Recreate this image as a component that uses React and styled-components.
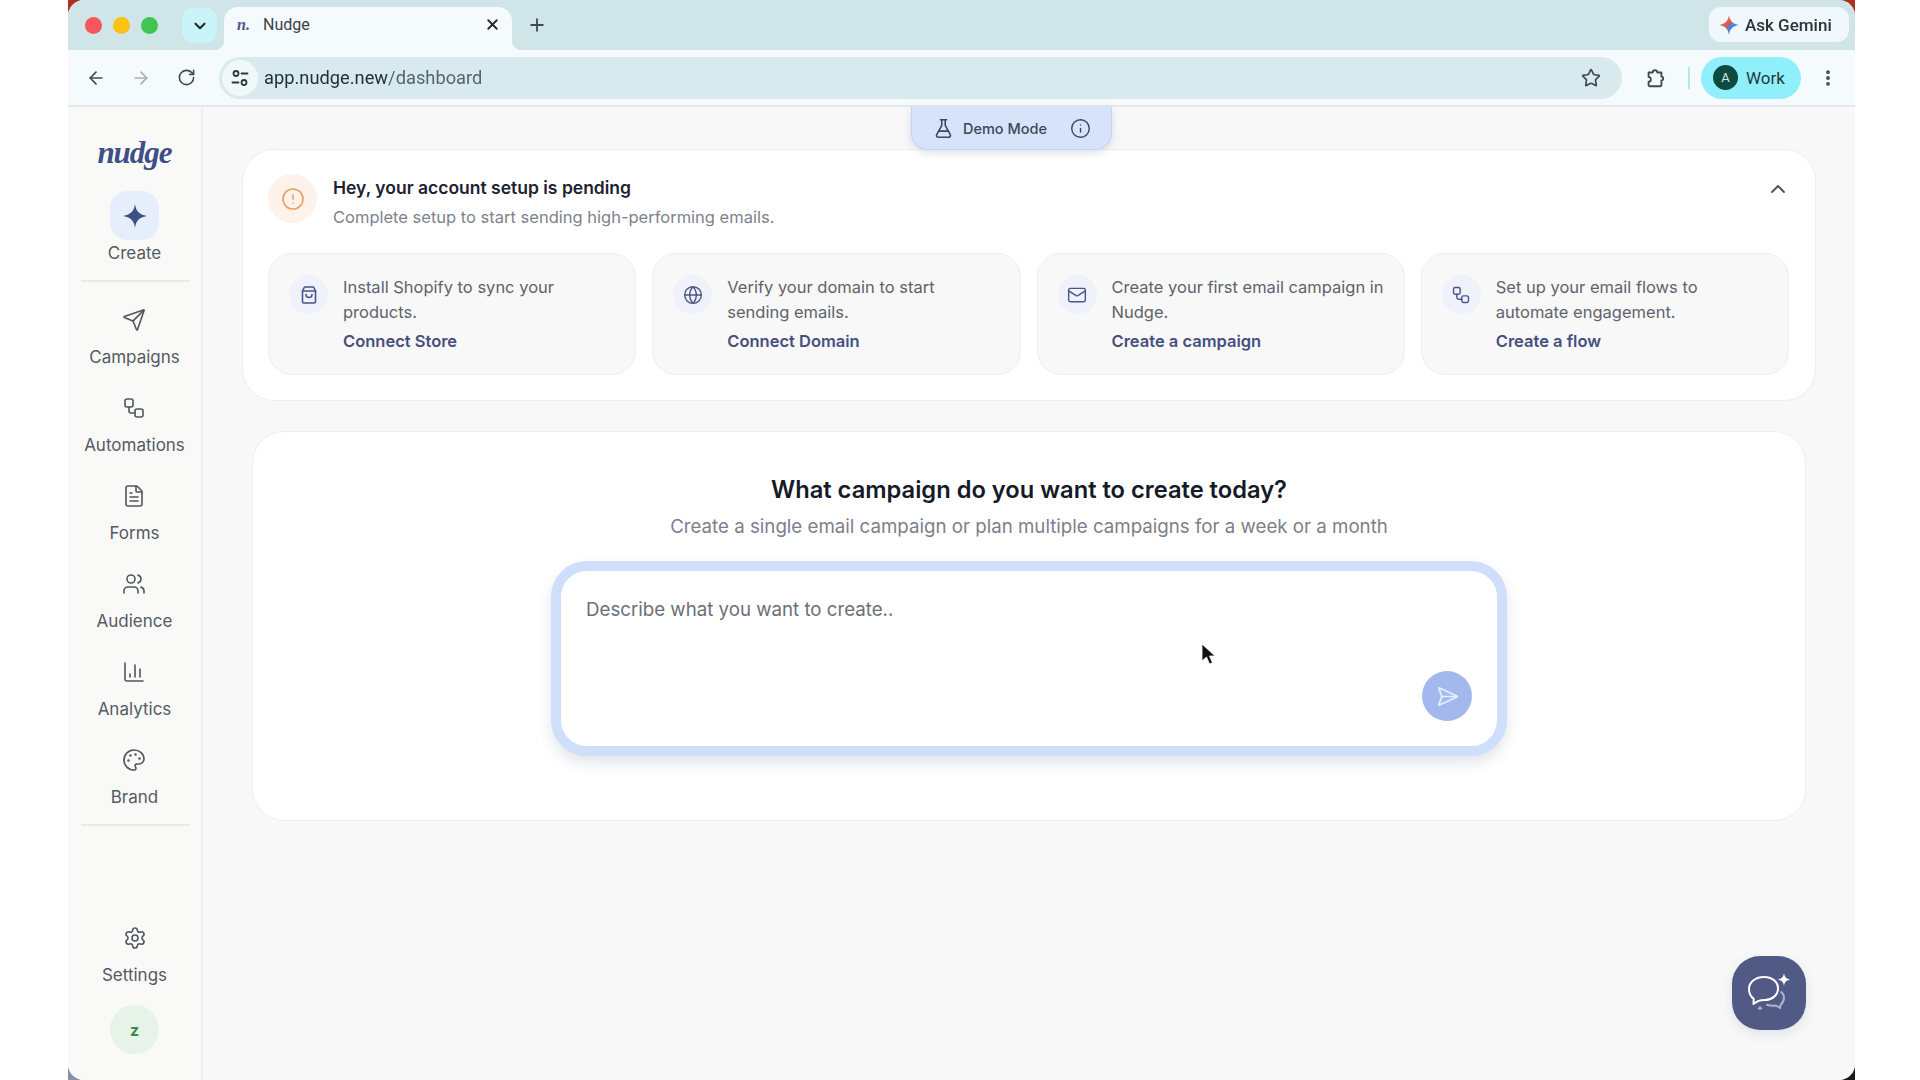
import React from "react";
import styled, { createGlobalStyle } from "styled-components";
import {
  ArrowLeft,
  ArrowRight,
  ChartColumn,
  ChevronDown,
  ChevronUp,
  CircleAlert,
  EllipsisVertical,
  FileText,
  FlaskConical,
  Globe,
  Info,
  Mail,
  Palette,
  Plus,
  RotateCw,
  Send,
  SendHorizontal,
  Settings,
  Star,
  Users,
  Workflow,
  X,
} from "lucide-react";

const GlobalStyle = createGlobalStyle`
  html, body {
    margin: 0;
    padding: 0;
    background: #fff;
    overflow: hidden;
  }
  body {
    font-family: Inter, "Liberation Sans", sans-serif;
  }
  * {
    box-sizing: border-box;
  }
`;

const Stage = styled.div`
  width: 1920px;
  height: 1080px;
  padding-left: 68px;
`;

const Desktop = styled.div`
  width: 1787px;
  height: 1080px;
  background: linear-gradient(180deg, #b0301f 0, #b0301f 40px, transparent 40px),
    linear-gradient(90deg, #8b90a8 0, #8b90a8 40px, #1c1c18 1700px);
`;

const Browser = styled.div`
  width: 100%;
  height: 100%;
  display: flex;
  flex-direction: column;
  border-radius: 16px;
  overflow: hidden;
  background: #f8f8f8;
  filter: blur(0.35px);
`;

const TabStrip = styled.div`
  height: 50px;
  flex: none;
  display: flex;
  align-items: flex-start;
  padding: 7px 6px 0 17px;
  background: #cfe5e8;
`;

const Lights = styled.div`
  display: flex;
  gap: 11px;
  margin-top: 10px;
  margin-right: 24px;
`;

const Light = styled.span`
  width: 17px;
  height: 17px;
  border-radius: 50%;
  background: ${(p) => p.$color};
`;

const TabMenu = styled.div`
  width: 35px;
  height: 35px;
  margin-top: 1px;
  margin-right: 7px;
  border-radius: 11px;
  background: #c9f5f8;
  display: flex;
  align-items: center;
  justify-content: center;
  color: #20303a;
`;

const Tab = styled.div`
  position: relative;
  width: 288px;
  height: 43px;
  display: flex;
  align-items: center;
  padding: 0 11px 8px 13px;
  background: #f5fafc;
  border-radius: 14px 14px 0 0;
  color: #3a4249;
  font: 400 16px Roboto, sans-serif;

  &::before,
  &::after {
    content: "";
    position: absolute;
    bottom: 0;
    width: 10px;
    height: 10px;
  }
  &::before {
    left: -10px;
    background: radial-gradient(circle at 0 0, transparent 10px, #f5fafc 10.5px);
  }
  &::after {
    right: -10px;
    background: radial-gradient(circle at 100% 0, transparent 10px, #f5fafc 10.5px);
  }
`;

const Favicon = styled.span`
  width: 26px;
  color: #4b5590;
  font: italic 700 16px "Liberation Serif", serif;
`;

const TabTitle = styled.span`
  flex: 1;
`;

const NewTab = styled.div`
  margin-left: 15px;
  height: 36px;
  display: flex;
  align-items: center;
  color: #3f4b52;
`;

const AskGemini = styled.div`
  margin-left: auto;
  width: 140px;
  height: 35px;
  display: flex;
  align-items: center;
  gap: 6px;
  padding-left: 10px;
  border-radius: 12px;
  background: #f0f8fb;
  color: #2c343a;
  font: 500 17px Roboto, sans-serif;
`;

const Toolbar = styled.div`
  height: 57px;
  flex: none;
  display: flex;
  align-items: center;
  padding: 0 0 0 17px;
  background: #f5fafc;
  border-bottom: 2px solid #e4e8ea;
`;

const NavButtons = styled.div`
  display: flex;
  gap: 23px;
  margin-right: 22px;
`;

const ToolIcon = styled.span`
  width: 22px;
  height: 22px;
  display: flex;
  align-items: center;
  justify-content: center;
  color: ${(p) => p.$color || "#3f4b52"};
`;

const MoreIcon = styled(ToolIcon)`
  margin-left: 16px;
`;

const Omnibox = styled.div`
  width: 1403px;
  height: 42px;
  display: flex;
  align-items: center;
  padding: 0 20px 0 3px;
  border-radius: 21px;
  background: #d9eaee;
`;

const SiteInfo = styled.span`
  width: 36px;
  height: 36px;
  margin-right: 6px;
  border-radius: 50%;
  background: #f1f8fa;
  display: flex;
  align-items: center;
  justify-content: center;
  color: #2d383e;
`;

const Url = styled.span`
  flex: 1;
  color: #23303a;
  font: 400 18.3px Roboto, sans-serif;

  span {
    color: #56636c;
  }
`;

const ToolbarRight = styled.div`
  display: flex;
  align-items: center;
  margin-left: 22px;
`;

const Separator = styled.span`
  width: 2px;
  height: 22px;
  margin: 0 11px 0 22px;
  background: #b4e8ef;
`;

const Profile = styled.div`
  width: 100px;
  height: 42px;
  display: flex;
  align-items: center;
  gap: 8px;
  padding-left: 12px;
  border-radius: 21px;
  background: #8ff0fb;
  color: #1f3a40;
  font: 400 17px Roboto, sans-serif;
`;

const ProfileAvatar = styled.span`
  width: 25px;
  height: 25px;
  border-radius: 50%;
  background: #0d4a40;
  color: #cfe9e2;
  display: flex;
  align-items: center;
  justify-content: center;
  font-size: 13px;
`;

const Body = styled.div`
  flex: 1;
  min-height: 0;
  display: flex;
`;

const Sidebar = styled.aside`
  width: 135px;
  flex: none;
  display: flex;
  flex-direction: column;
  align-items: center;
  padding-bottom: 26px;
  background: #f9faf8;
  border-right: 2px solid #eff0ee;
`;

const Logo = styled.div`
  height: 84px;
  padding-top: 21px;
  color: #3f4e85;
  font: italic 700 31px/50px "Liberation Serif", serif;
  letter-spacing: -1px;
`;

const CreateIcon = styled.div`
  width: 49px;
  height: 49px;
  border-radius: 17px;
  background: #e7eefb;
  display: flex;
  align-items: center;
  justify-content: center;
`;

const NavLabel = styled.span`
  color: #545a63;
  font-size: 17px;
  line-height: 20px;
  font-weight: 400;
  white-space: nowrap;
`;

const CreateItem = styled.div`
  display: flex;
  flex-direction: column;
  align-items: center;
  gap: 3px;
`;

const Rule = styled.div`
  width: 108px;
  height: 2px;
  flex: none;
  background: #e9eae8;
  margin-top: ${(p) => p.$top}px;
`;

const NavList = styled.nav`
  display: flex;
  flex-direction: column;
  align-items: center;
  gap: 29px;
  padding-top: 26px;
  padding-bottom: 17px;
`;

const NavItem = styled.div`
  display: flex;
  flex-direction: column;
  align-items: center;
  gap: 15px;
  color: #50565f;
`;

const SettingsItem = styled(NavItem)`
  margin-top: auto;
`;

const UserBadge = styled.div`
  width: 49px;
  height: 49px;
  margin-top: 20px;
  border-radius: 50%;
  background: #e7f3e8;
  color: #3c8a4a;
  display: flex;
  align-items: center;
  justify-content: center;
  font-size: 16px;
  font-weight: 700;
`;

const Main = styled.main`
  position: relative;
  flex: 1;
  padding: 42px 39px 0;
  background: #f8f8f8;
`;

const DemoTab = styled.div`
  position: absolute;
  top: 0;
  left: 708px;
  width: 201px;
  height: 43px;
  z-index: 2;
  display: flex;
  align-items: center;
  padding: 0 20px 0 21px;
  border: 1px solid #c3d3f3;
  border-top: none;
  border-radius: 0 0 17px 17px;
  background: #d7e3fb;
  box-shadow: 0 3px 8px rgba(70, 90, 140, 0.18);
  color: #3d4658;
  font-size: 14.5px;
  font-weight: 500;
`;

const DemoLabel = styled.span`
  flex: 1;
  padding-left: 9px;
`;

const SetupCard = styled.section`
  height: 252px;
  padding: 24px 26px 24px 25px;
  border: 1px solid #eeeeee;
  border-radius: 32px;
  background: #fff;
`;

const SetupHeader = styled.div`
  display: flex;
  align-items: flex-start;
  gap: 16px;
  height: 50px;
  margin-bottom: 29px;
`;

const AlertBadge = styled.div`
  width: 49px;
  height: 49px;
  flex: none;
  border-radius: 50%;
  background: #fdf3ea;
  color: #e8a468;
  display: flex;
  align-items: center;
  justify-content: center;
`;

const SetupText = styled.div`
  flex: 1;
  padding-top: 3px;
  display: flex;
  flex-direction: column;
  gap: 7px;
`;

const SetupTitle = styled.div`
  color: #1c2230;
  font-size: 17.5px;
  line-height: 22px;
  font-weight: 600;
`;

const SetupSub = styled.div`
  color: #7d828c;
  font-size: 16.5px;
  line-height: 22px;
`;

const Collapse = styled.div`
  width: 24px;
  padding-top: 3px;
  margin-right: -1px;
  color: #4a5059;
`;

const Steps = styled.div`
  display: grid;
  grid-template-columns: repeat(4, 1fr);
  gap: 16px;
`;

const StepCard = styled.div`
  height: 122px;
  display: flex;
  align-items: flex-start;
  gap: 15px;
  padding: 21px 16px 0 20px;
  border: 1px solid #eeeef0;
  border-radius: 24px;
  background: #f8f8f9;
`;

const StepIcon = styled.div`
  width: 39px;
  height: 39px;
  flex: none;
  border-radius: 50%;
  background: #eff1fb;
  color: #4a5488;
  display: flex;
  align-items: center;
  justify-content: center;
`;

const StepBody = styled.div`
  flex: 1;
`;

const StepText = styled.div`
  color: #5f636b;
  font-size: 16.5px;
  line-height: 25px;
  white-space: pre-line;
`;

const StepLink = styled.div`
  margin-top: 5px;
  color: #464f7f;
  font-size: 16.5px;
  line-height: 22px;
  font-weight: 600;
`;

const CreateCard = styled.section`
  height: 390px;
  margin: 30px 10px 0;
  padding-top: 43px;
  display: flex;
  flex-direction: column;
  align-items: center;
  border: 1px solid #eeeeee;
  border-radius: 32px;
  background: #fff;
`;

const Headline = styled.h2`
  margin: 0;
  color: #141a28;
  font-size: 23.7px;
  line-height: 30px;
  font-weight: 600;
`;

const Subhead = styled.p`
  margin: 8px 0 20px;
  color: #7b808c;
  font-size: 18.7px;
  line-height: 28px;
`;

const Composer = styled.div`
  position: relative;
  width: 956px;
  height: 195px;
  display: flex;
  justify-content: space-between;
  padding: 27px 25px 25px;
  border: 10px solid #cfdffb;
  border-radius: 36px;
  background: #fff;
  box-shadow: 0 7px 14px rgba(60, 70, 100, 0.14);
`;

const Placeholder = styled.span`
  color: #6b6f78;
  font-size: 18.7px;
  line-height: 24px;
`;

const SendButton = styled.div`
  width: 50px;
  height: 50px;
  align-self: flex-end;
  border-radius: 50%;
  background: #a3b9ee;
  color: #e8eefc;
  display: flex;
  align-items: center;
  justify-content: center;
`;

const Cursor = styled.svg`
  position: absolute;
  left: 640px;
  top: 72px;
`;

const ChatButton = styled.div`
  position: absolute;
  right: 49px;
  bottom: 50px;
  width: 74px;
  height: 74px;
  border-radius: 28px;
  background: #505a85;
  box-shadow: 0 4px 12px rgba(60, 70, 100, 0.12);
`;

const nav = [
  { label: "Campaigns", Icon: Send },
  { label: "Automations", Icon: Workflow },
  { label: "Forms", Icon: FileText },
  { label: "Audience", Icon: Users },
  { label: "Analytics", Icon: ChartColumn },
  { label: "Brand", Icon: Palette },
];

const BagIcon = () => (
  <svg width="20" height="20" viewBox="0 0 20 20" fill="none" stroke="currentColor" strokeWidth="1.6" strokeLinecap="round" strokeLinejoin="round">
    <path d="M5.5 2h9l2 4v10.5a1.5 1.5 0 0 1-1.5 1.5H5a1.5 1.5 0 0 1-1.5-1.5V6z" />
    <path d="M3.5 6h13" />
    <path d="M7 9.5a3 3 0 0 0 6 0" />
  </svg>
);

const steps = [
  { text: "Install Shopify to sync your\nproducts.", link: "Connect Store", icon: <BagIcon /> },
  { text: "Verify your domain to start\nsending emails.", link: "Connect Domain", icon: <Globe size={20} strokeWidth={1.7} /> },
  { text: "Create your first email campaign in\nNudge.", link: "Create a campaign", icon: <Mail size={20} strokeWidth={1.7} /> },
  { text: "Set up your email flows to\nautomate engagement.", link: "Create a flow", icon: <Workflow size={20} strokeWidth={1.7} /> },
];

const Sparkle = ({ size, color }) => (
  <svg width={size} height={size} viewBox="0 0 24 24" fill={color}>
    <path d="M12 1c.9 6.500 3.500 9.600 11 11-7.500 1.400-10.100 4.500-11 11-.9-6.500-3.500-9.600-11-11 7.500-1.400 10.100-4.500 11-11z" />
  </svg>
);

const GeminiStar = () => (
  <svg width="20" height="20" viewBox="0 0 24 24">
    <defs>
      <linearGradient id="gem" x1="0" y1="0" x2="1" y2="1">
        <stop offset="0" stopColor="#e8a33d" />
        <stop offset="0.45" stopColor="#d9584f" />
        <stop offset="0.6" stopColor="#4a86e8" />
        <stop offset="1" stopColor="#45b36b" />
      </linearGradient>
    </defs>
    <path fill="url(#gem)" d="M12 0c1 7 4.500 10.800 12 12-7.500 1.200-11 5-12 12-1-7-4.500-10.800-12-12 7.500-1.200 11-5 12-12z" />
  </svg>
);

const TuneIcon = () => (
  <svg width="20" height="20" viewBox="0 0 20 20" fill="none" stroke="currentColor" strokeWidth="1.8" strokeLinecap="round">
    <circle cx="6" cy="5.500" r="2.500" />
    <path d="M11.500 5.500h6" />
    <path d="M2.500 14.500h6" />
    <circle cx="14" cy="14.500" r="2.500" />
  </svg>
);

const ExtensionIcon = () => (
  <svg width="24" height="24" viewBox="0 0 24 24" fill="none" stroke="#3f4b52" strokeWidth="2" strokeLinejoin="round">
    <path d="M5 6h4.500a2.500 2.500 0 0 1 5 0H19v4.500a2 2 0 0 1 0 4V20a1 1 0 0 1-1 1H6a1 1 0 0 1-1-1v-4a2.500 2.500 0 0 0 0-5z" />
  </svg>
);

const ChatGlyph = () => (
  <svg width="74" height="74" viewBox="0 0 74 74" fill="none" strokeLinecap="round" strokeLinejoin="round">
    <path stroke="#fff" strokeWidth="2" d="M32 21c8 0 14 4.500 14 11.500S39.500 44 33 44c-3 0-5 .3-7 1.200L21.500 48l.2-5.200C18.500 40.500 17 37 17 33c0-7.500 7-12 15-12z" />
    <path stroke="#aeb4d0" strokeWidth="2" d="M49 36c4 2.500 4 9-.5 13l-.5 3-4-2.500c-3 .5-6 .2-9-.8" />
    <path fill="#fff" d="M52 17c.6 4 2 5.500 6 6.500-4 1-5.400 2.500-6 6.500-.6-4-2-5.500-6-6.500 4-1 5.400-2.500 6-6.500z" />
    <path fill="#aeb4d0" d="M28 49c.3 2 1 2.700 3 3.200-2 .5-2.700 1.200-3 3.200-.3-2-1-2.700-3-3.200 2-.5 2.700-1.200 3-3.200z" />
  </svg>
);

const App = () => (
  <Stage>
    <GlobalStyle />
    <Desktop>
      <Browser>
        <TabStrip>
          <Lights>
            <Light $color="#f7565c" />
            <Light $color="#fcc20f" />
            <Light $color="#3fc552" />
          </Lights>
          <TabMenu>
            <ChevronDown size={18} strokeWidth={3} />
          </TabMenu>
          <Tab>
            <Favicon>n.</Favicon>
            <TabTitle>Nudge</TabTitle>
            <X size={17} strokeWidth={2.6} color="#20282e" />
          </Tab>
          <NewTab>
            <Plus size={20} strokeWidth={2.2} />
          </NewTab>
          <AskGemini>
            <GeminiStar />
            Ask Gemini
          </AskGemini>
        </TabStrip>

        <Toolbar>
          <NavButtons>
            <ToolIcon><ArrowLeft size={20} strokeWidth={2} /></ToolIcon>
            <ToolIcon $color="#a8b0b4"><ArrowRight size={20} strokeWidth={2} /></ToolIcon>
            <ToolIcon><RotateCw size={19} strokeWidth={2} /></ToolIcon>
          </NavButtons>
          <Omnibox>
            <SiteInfo><TuneIcon /></SiteInfo>
            <Url>app.nudge.new<span>/dashboard</span></Url>
            <ToolIcon><Star size={20} strokeWidth={2} /></ToolIcon>
          </Omnibox>
          <ToolbarRight>
            <ToolIcon><ExtensionIcon /></ToolIcon>
            <Separator />
            <Profile>
              <ProfileAvatar>A</ProfileAvatar>
              Work
            </Profile>
            <MoreIcon>
              <EllipsisVertical size={20} strokeWidth={2.6} />
            </MoreIcon>
          </ToolbarRight>
        </Toolbar>

        <Body>
          <Sidebar>
            <Logo>nudge</Logo>
            <CreateItem>
              <CreateIcon><Sparkle size={26} color="#3c4f86" /></CreateIcon>
              <NavLabel>Create</NavLabel>
            </CreateItem>
            <Rule $top={17} />
            <NavList>
              {nav.map(({ label, Icon }) => (
                <NavItem key={label}>
                  <Icon size={24} strokeWidth={1.6} />
                  <NavLabel>{label}</NavLabel>
                </NavItem>
              ))}
            </NavList>
            <Rule $top={0} />
            <SettingsItem>
              <Settings size={24} strokeWidth={1.6} />
              <NavLabel>Settings</NavLabel>
            </SettingsItem>
            <UserBadge>z</UserBadge>
          </Sidebar>

          <Main>
            <DemoTab>
              <FlaskConical size={21} strokeWidth={1.8} />
              <DemoLabel>Demo Mode</DemoLabel>
              <Info size={21} strokeWidth={1.6} />
            </DemoTab>

            <SetupCard>
              <SetupHeader>
                <AlertBadge><CircleAlert size={24} strokeWidth={1.7} /></AlertBadge>
                <SetupText>
                  <SetupTitle>Hey, your account setup is pending</SetupTitle>
                  <SetupSub>Complete setup to start sending high-performing emails.</SetupSub>
                </SetupText>
                <Collapse><ChevronUp size={24} strokeWidth={1.8} /></Collapse>
              </SetupHeader>
              <Steps>
                {steps.map((s) => (
                  <StepCard key={s.link}>
                    <StepIcon>{s.icon}</StepIcon>
                    <StepBody>
                      <StepText>{s.text}</StepText>
                      <StepLink>{s.link}</StepLink>
                    </StepBody>
                  </StepCard>
                ))}
              </Steps>
            </SetupCard>

            <CreateCard>
              <Headline>What campaign do you want to create today?</Headline>
              <Subhead>Create a single email campaign or plan multiple campaigns for a week or a month</Subhead>
              <Composer>
                <Placeholder>Describe what you want to create..</Placeholder>
                <SendButton><SendHorizontal size={23} strokeWidth={1.8} /></SendButton>
                <Cursor width="16" height="22" viewBox="0 0 16 22">
                  <path d="M1 1v17l4.500-4 3 7 3-1.200-3-6.800H14z" fill="#111" stroke="#fff" strokeWidth="0.8" />
                </Cursor>
              </Composer>
            </CreateCard>

            <ChatButton><ChatGlyph /></ChatButton>
          </Main>
        </Body>
      </Browser>
    </Desktop>
  </Stage>
);

export default App;
